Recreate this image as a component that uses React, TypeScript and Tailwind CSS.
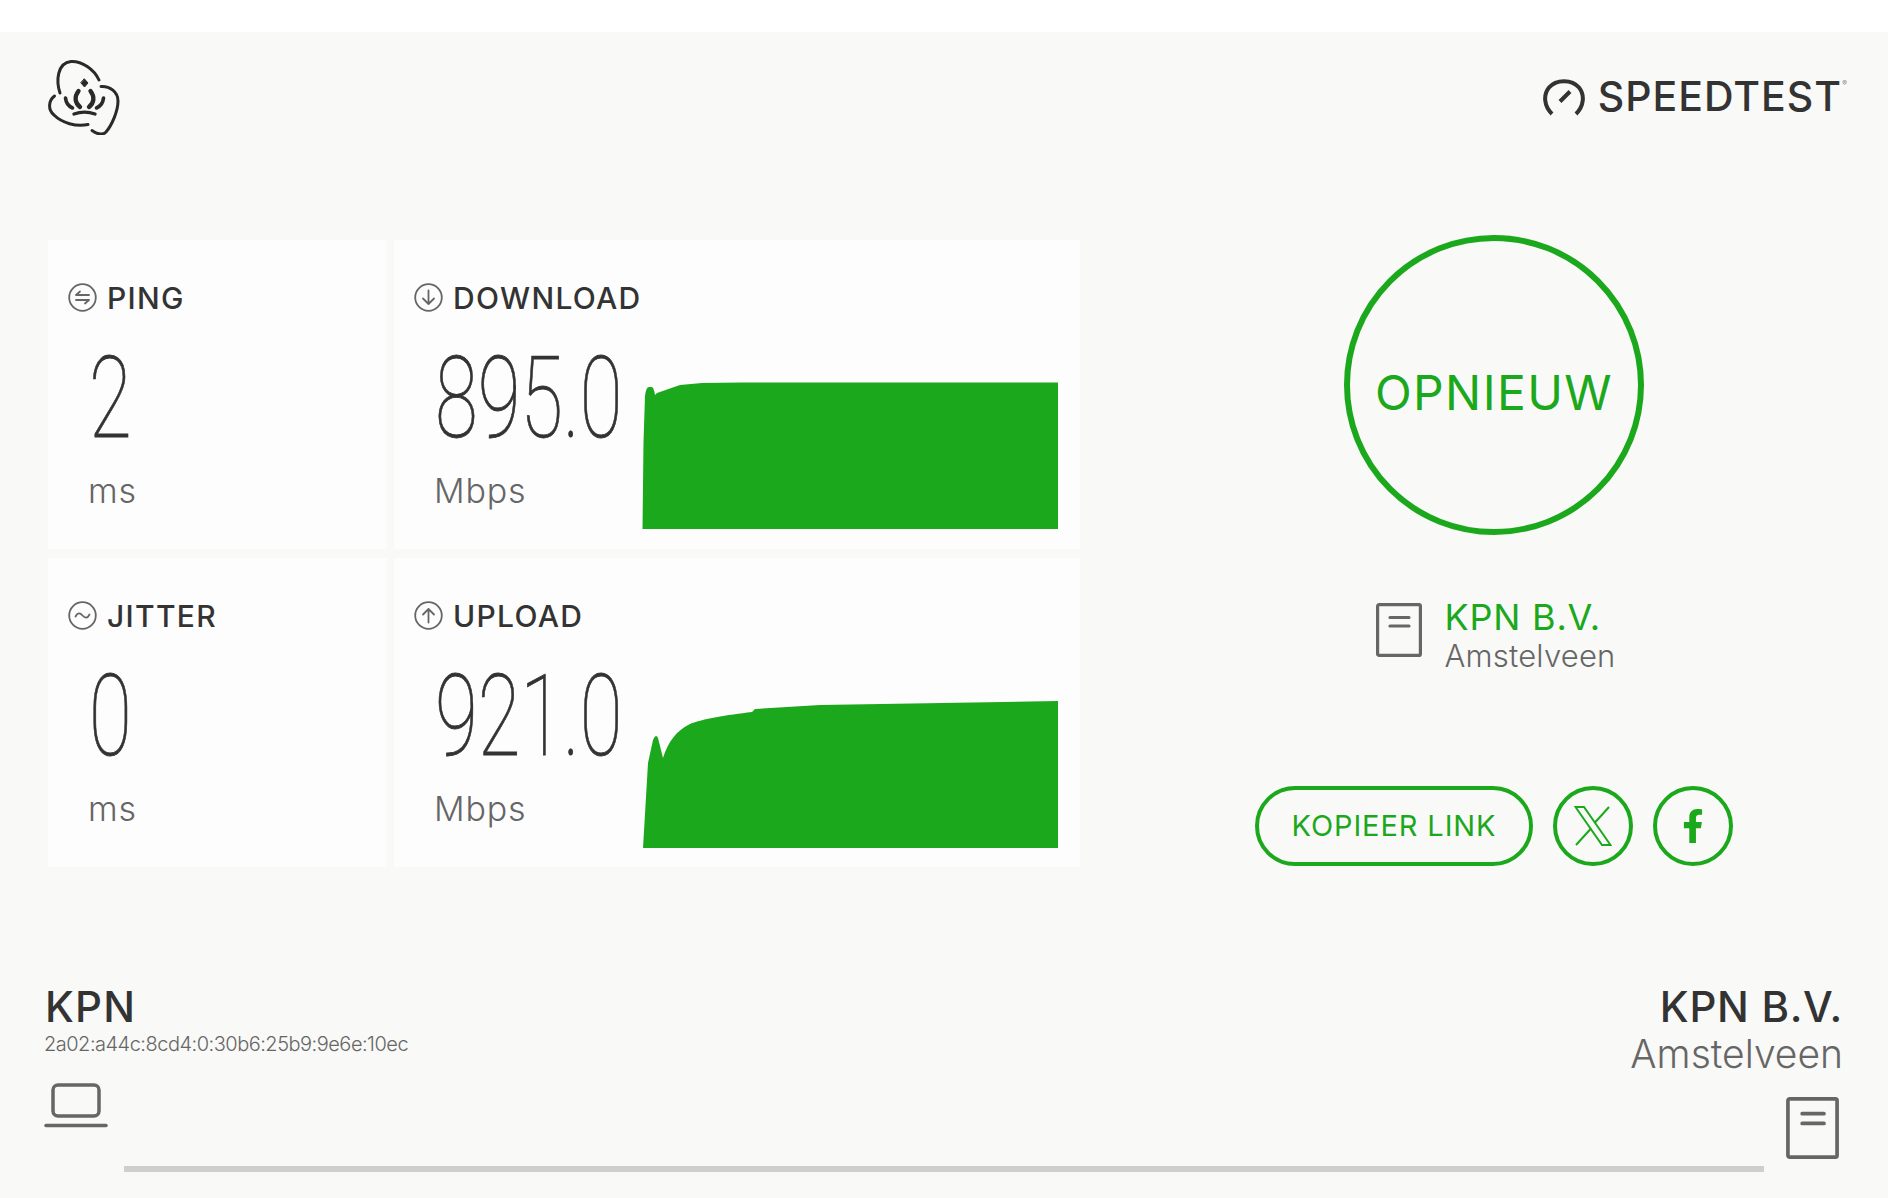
import { FaFacebookF } from "react-icons/fa"

function KpnLogo() {
  return (
    <svg width="74" height="76" viewBox="46 58 74 76" fill="none" stroke="#2b2a28" strokeLinecap="round" strokeWidth="3" className="-ml-[2px]">
      <path d="M60 92C56 80 57 62 71 60.500C82 60 94 68 99 79" />
      <path d="M101 85.500C110 85 118 91 118 100C118 110 112 124 106 131C102 135 97 133 92 129.500" />
      <path d="M54.500 95C48 100 48 109 54 114C62 122 76 126 88 123.500" />
      <path d="M84.500 78L88 82L84.500 86L81 82Z" fill="#2b2a28" strokeWidth="1" />
      <path d="M78.500 90C74 96 75 102 80 106" strokeWidth="4.400" />
      <path d="M90.500 90C95 96 94 102 89 106" strokeWidth="4.400" />
      <path d="M65.500 97C66 102 68 105 72.500 107" strokeWidth="3.600" />
      <path d="M103.500 97C103 102 101 105 96.500 107" strokeWidth="3.600" />
      <path d="M74 113C81 110.500 88 110.500 95 113" strokeWidth="3.400" />
    </svg>
  )
}

function DocIcon({ w, h }: { w: number; h: number }) {
  return (
    <svg width={w} height={h} viewBox="0 0 46 54" fill="none" stroke="#666" strokeWidth="3.200" strokeLinecap="round" strokeLinejoin="round" className="shrink-0">
      <rect x="1.600" y="1.600" width="42.800" height="50.800" rx="1.500" />
      <path d="M14 14.500H33M14 23H33" />
    </svg>
  )
}

function MetricIcon({ kind }: { kind: string }) {
  return (
    <svg width="29" height="29" viewBox="0 0 29 29" fill="none" stroke="#666" strokeWidth="1.800" strokeLinecap="round" strokeLinejoin="round" className="shrink-0">
      <circle cx="14.500" cy="14.500" r="13.300" />
      {kind === "ping" && <path d="M8 12H21M8 12L12 8.500M21 17H8M21 17L17 20.500" />}
      {kind === "jitter" && <path d="M7.500 15.500C9.500 11.500 12 11.500 14.500 14.500C17 17.500 19.500 17.500 21.500 13.500" />}
      {kind === "download" && <path d="M14.500 7.500V21M9 15.500L14.500 21L20 15.500" />}
      {kind === "upload" && <path d="M14.500 21.500V8M9 13.500L14.500 8L20 13.500" />}
    </svg>
  )
}

const downloadPath = "M0.5 147L1.5 60L3 14Q4 5 7 5L10 5Q12 6 13 13L15 11L38 3L60 1L100 0.5L416 0.5L416 147Z"
const uploadPath = "M1 148L6 63L11 40Q14 33 16 38L21 58C26 42 34 31 48 24C60 19 85 15 110 12L113 9L178 5L416 1L416 148Z"

function MetricCard({ kind, label, value, unit, chart }: { kind: string; label: string; value: string; unit: string; chart?: string }) {
  return (
    <div className="flex h-[309px] flex-col bg-[#fdfdfd] pl-5 pr-[22px] pt-[43px]">
      <div className="flex h-[29px] items-center gap-[10px]">
        <MetricIcon kind={kind} />
        <span className="text-[30px] font-medium leading-none tracking-[1.3px] text-[#333]">{label}</span>
      </div>
      <div className="flex flex-1 items-start">
        <div className="w-[228px] shrink-0 pl-[20px]">
          <div className="ml-px mt-[32px] h-[110px] origin-left scale-x-[0.69] whitespace-nowrap font-['Roboto',sans-serif] text-[113px] font-thin leading-[110px] text-[#333] [-webkit-text-stroke:0.8px_#333]">
            {value}
          </div>
          <div className="mt-[20px] text-[34px] font-light leading-none tracking-[0.8px] text-[#666]">{unit}</div>
        </div>
        {chart && (
          <svg width="416" height="148" viewBox="0 0 416 148" className="mt-[70px] shrink-0">
            <path d={chart} fill="#1ca81c" />
          </svg>
        )}
      </div>
    </div>
  )
}

export default function App() {
  return (
    <div className="min-h-[1198px] bg-white pt-8 font-['Inter',sans-serif]">
      <div className="h-[1166px] overflow-hidden bg-[#f9f9f7]">
        {/* Header */}
        <header className="flex h-[103px] items-end justify-between pl-12 pr-[46px]">
          <KpnLogo />
          <div className="mb-[18px] flex items-center gap-[13px]">
            <svg width="42" height="38" viewBox="0 0 42 38" fill="none" stroke="#333" strokeWidth="4">
              <path d="M9 36C1 28 0 17 6 9.500C13 1 29 1 36 9.500C42 17 41 28 33 36" />
              <path d="M17 23.500L27 13.500" />
            </svg>
            <span className="relative text-[41px] font-medium leading-none tracking-[1px] text-[#333]">
              SPEEDTEST
              <span className="absolute -right-[6px] top-[4px] text-[7px] leading-none text-[#888]">®</span>
            </span>
          </div>
        </header>

        {/* Results */}
        <main className="mt-[105px] flex pl-12 pr-12">
          <div className="grid w-[1032px] shrink-0 grid-cols-[339px_686px] gap-x-[7px] gap-y-[9px]">
            <MetricCard kind="ping" label="PING" value="2" unit="ms" />
            <MetricCard kind="download" label="DOWNLOAD" value="895.0" unit="Mbps" chart={downloadPath} />
            <MetricCard kind="jitter" label="JITTER" value="0" unit="ms" />
            <MetricCard kind="upload" label="UPLOAD" value="921.0" unit="Mbps" chart={uploadPath} />
          </div>

          <div className="flex flex-1 flex-col items-center pl-[68px]">
            <div className="-mt-[5px] flex h-[300px] w-[300px] items-center justify-center rounded-full border-[6px] border-[#1ca81c] pt-4 text-[48px] font-normal leading-none tracking-[1.4px] text-[#1ca81c]">
              OPNIEUW
            </div>
            <div className="ml-1 mt-[68px] flex items-start gap-[22px]">
              <DocIcon w={46} h={54} />
              <div className="-mt-[6px]">
                <div className="text-[36px] leading-[40px] tracking-[0.8px] text-[#1ca81c]">KPN B.V.</div>
                <div className="mt-[2px] text-[31px] font-light leading-[34px] tracking-[0.2px] text-[#666]">Amstelveen</div>
              </div>
            </div>
            <div className="mt-[113px] flex items-center gap-5">
              <button className="h-20 w-[278px] rounded-full border-4 border-[#1ca81c] text-[29px] font-normal tracking-[0.9px] text-[#1ca81c]">
                KOPIEER LINK
              </button>
              <button className="flex h-20 w-20 items-center justify-center rounded-full border-4 border-[#1ca81c]">
                <svg width="38" height="40" viewBox="0 0 38 40" fill="none" stroke="#1ca81c" strokeWidth="2">
                  <path d="M1.500 1H10L36.500 39H28Z" />
                  <path d="M35 1L21 16.500M17 22.500L2 39" />
                </svg>
              </button>
              <button className="flex h-20 w-20 items-center justify-center rounded-full border-4 border-[#1ca81c]">
                <FaFacebookF size={34} color="#1ca81c" />
              </button>
            </div>
          </div>
        </main>

        {/* Footer */}
        <footer className="mt-[117px] pl-[44px] pr-[45px]">
          <div className="flex items-start justify-between">
            <div>
              <div className="pl-px text-[42px] font-medium leading-[46px] tracking-[1.2px] text-[#333]">KPN</div>
              <div className="mt-[2px] text-[20px] font-light leading-6 tracking-[-0.5px] text-[#666]">2a02:a44c:8cd4:0:30b6:25b9:9e6e:10ec</div>
            </div>
            <div className="text-right">
              <div className="text-[42px] font-medium leading-[46px] tracking-[0.7px] text-[#333]">KPN B.V.</div>
              <div className="mt-[2px] text-[39px] font-light leading-[44px] text-[#666]">Amstelveen</div>
            </div>
          </div>
          <div className="flex items-start">
            <svg width="64" height="46" viewBox="0 0 64 46" fill="none" stroke="#666" strokeLinecap="round" strokeWidth="3.500" className="mt-[7px] shrink-0">
              <rect x="9" y="2" width="46" height="31" rx="5" />
              <path d="M2 42.500H62" />
            </svg>
            <div className="ml-[16px] mr-[22px] mt-[90px] h-[6px] flex-1 bg-[#cfcfcd]" />
            <div className="mr-1 mt-[21px]">
              <DocIcon w={53} h={62} />
            </div>
          </div>
        </footer>
      </div>
    </div>
  )
}
